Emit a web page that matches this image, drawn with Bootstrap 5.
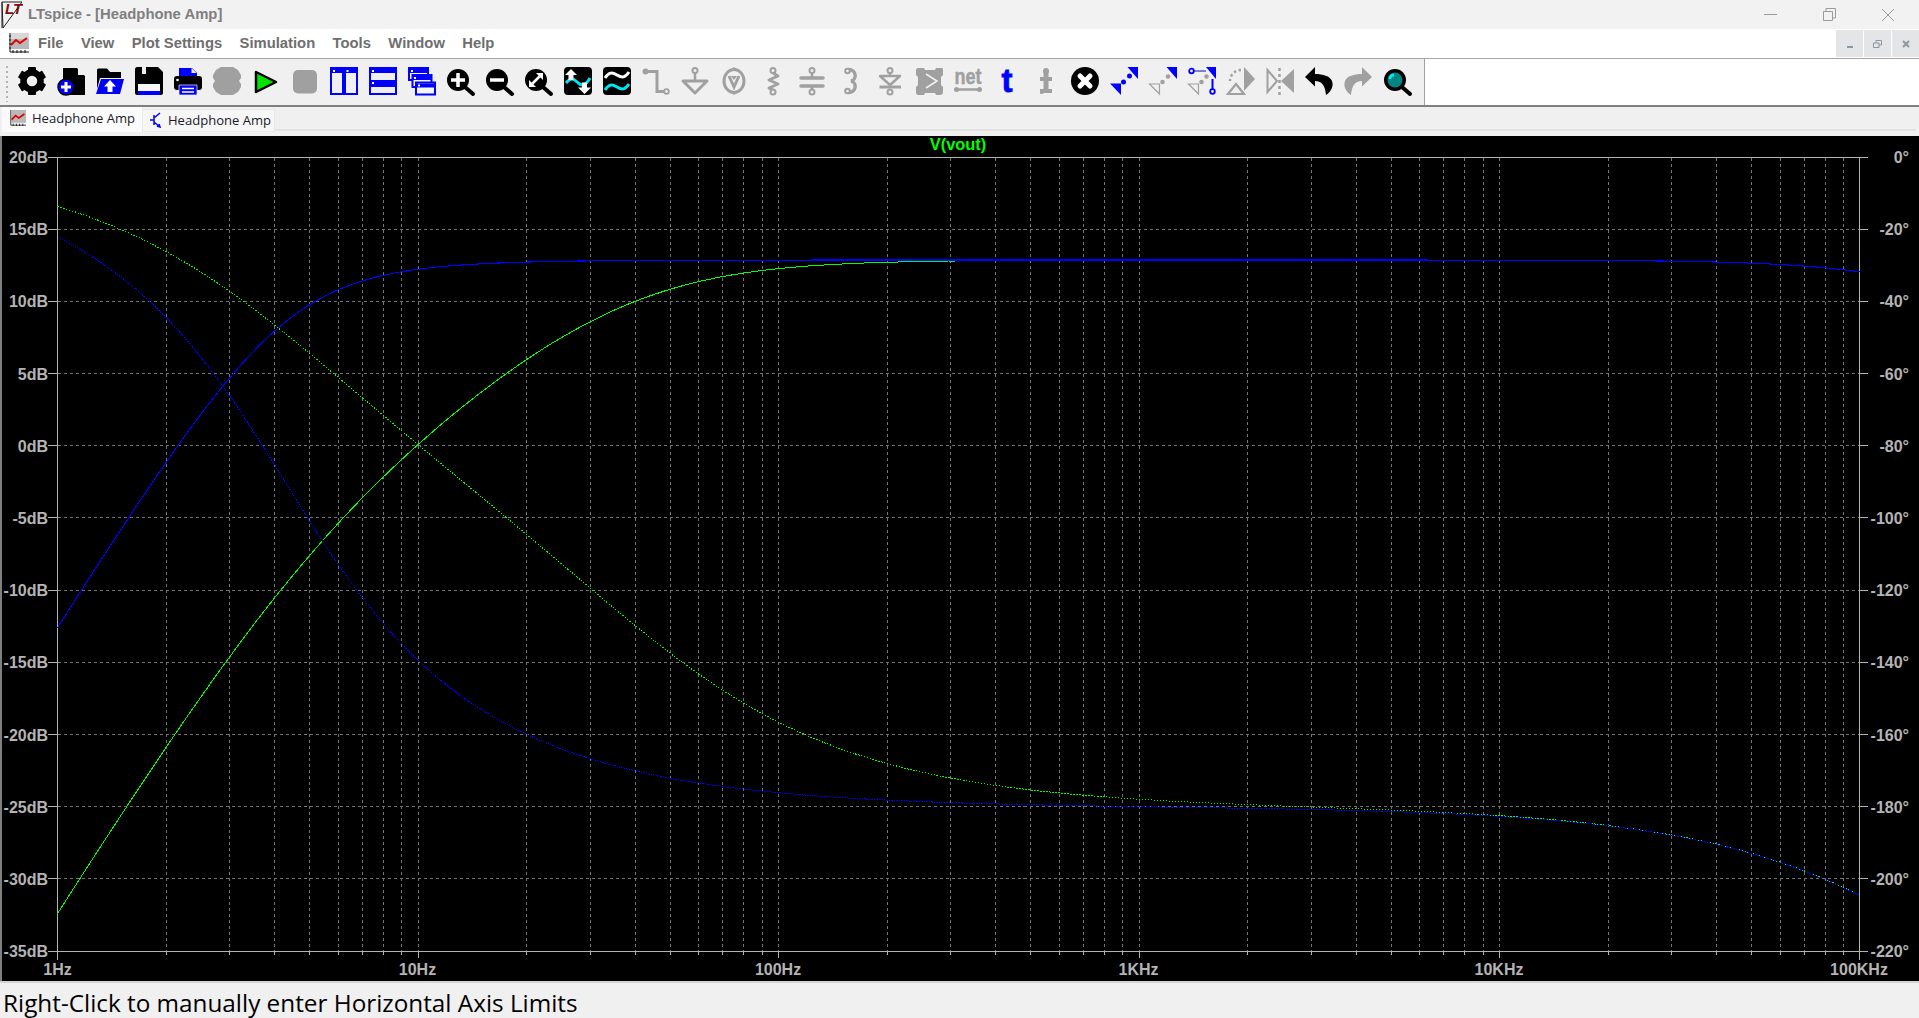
<!DOCTYPE html>
<html lang="en">
<head>
<meta charset="utf-8">
<title>LTspice - [Headphone Amp]</title>
<link href="https://cdn.jsdelivr.net/npm/bootstrap@5.3.0/dist/css/bootstrap.min.css" rel="stylesheet">
<style>
html,body{height:100%;overflow:hidden;margin:0;background:#f0f0f0}
body{font-family:"Liberation Sans",Arial,sans-serif}
.titlebar{height:29px;background:#f2f2f2;color:#7f7f7f;font-weight:700;font-size:14.85px}
.titlebar svg.logo{margin-left:1px;margin-right:5px}
.winctl{padding-right:2px}
.winbtn{width:58.500px;height:29px}
.menubar{height:30px;background:#fff;border-bottom:1px solid #a6a6a6}
.menubar .nav-link{padding:0;margin-right:17.400px;color:#6e6e6e;font-weight:700;font-size:14.8px;line-height:29px}
.menubar .micon{margin:0 9px 0 9px}
.mdi{width:27px;height:27px;background:#e3e5e7;margin-left:1px;margin-top:1px}
.toolrow{height:48px;background:#fff;border-bottom:2px solid #7f7f7f}
.toolbar{width:1425px;background:#f0f0f0;border-right:1px solid #a0a0a0;padding:8px 0 0 13.500px}
.gripper{width:2px;height:36px;margin:-1px 5px 0 -8px;background-image:repeating-linear-gradient(#b4b4b4 0 2px,transparent 2px 5px)}
.tb{width:39px;height:28px;padding:0 5.500px;border:0;border-radius:0;line-height:0;flex:none}
.tb svg{display:block;overflow:visible}
.tabs{height:29px;background:#f0f0f0;padding-left:2px;font-family:"Open Sans",sans-serif;font-size:13.050px;color:#1a1a2a}
.tabline{height:24px;border-bottom:2px solid #e2e2e2;margin-right:3px}
.tabx{height:24px;white-space:nowrap}
.tab1{width:140px;background:#fbfbfb;height:25px;margin-bottom:-1px;padding:3px 0 0 8px;line-height:15px}
.tab2{width:133px;background:#f6f6f6;border:1px solid #e9e9e9;height:23px;margin-top:2px;padding:1px 0 0 5px;line-height:18px}
.tab1 svg,.tab2 svg{margin-right:6px;vertical-align:-3px}
.plot{flex:1 1 auto;min-height:0;background:#000;border-left:2px solid #808080;overflow:hidden}
.plot svg{display:block;margin-left:-2px}
.plot text{font-family:"Liberation Sans",Arial,sans-serif;font-weight:700;font-size:16px;fill:#b4b4b4}
.plot text.title{fill:#00ff00;font-size:16.400px}
.status{height:37px;background:#f0f0f0;border-top:2px solid #d4d4d4;font-family:"Open Sans",sans-serif;font-size:24.300px;line-height:40px;color:#000;padding-left:3px;white-space:nowrap;overflow:hidden}
</style>
</head>
<body class="d-flex flex-column vh-100">

<header class="titlebar d-flex align-items-center flex-shrink-0">
  <svg class="logo" width="22" height="28" viewBox="0 0 22 28">
    <path d="M1 1 L21 1 L2 27 Z M1 1 V27" fill="none" stroke="#222" stroke-width="1"/>
    <text x="4" y="13" font-family="Liberation Sans" font-weight="700" font-style="italic" font-size="15" fill="#7a1010">LT</text>
  </svg>
  <span>LTspice - [Headphone Amp]</span>
  <div class="winctl ms-auto d-flex">
    <span class="winbtn d-flex align-items-center justify-content-center"><svg width="13" height="13" viewBox="0 0 13 13"><path d="M0 6.500H13" stroke="#9b9b9b" fill="none"/></svg></span>
    <span class="winbtn d-flex align-items-center justify-content-center"><svg width="13" height="13" viewBox="0 0 13 13"><path d="M.5 3.500h9v9h-9zM3 3V.5h9.500V10H10" stroke="#9b9b9b" fill="none"/></svg></span>
    <span class="winbtn d-flex align-items-center justify-content-center"><svg width="14" height="14" viewBox="0 0 14 14"><path d="M1 1L13 13M13 1L1 13" stroke="#9b9b9b" fill="none"/></svg></span>
  </div>
</header>

<nav class="menubar d-flex align-items-start flex-shrink-0">
  <svg class="micon mt-1" width="20" height="20" viewBox="0 0 20 20">
    <rect x="2" width="18" height="16" fill="#b8b8b8"/><path d="M2 0H20V6H2Z" fill="#d8d8d8"/>
    <path d="M2 12L7 7L11 10L18 5" fill="none" stroke="#e00000" stroke-width="2"/>
    <path d="M1 0V19H20M0 3H2M0 7H2M0 11H2M0 15H2M4 17V20M8 17V20M12 17V20M16 17V20" fill="none" stroke="#111" stroke-width="1"/>
  </svg>
  <ul class="nav">
    <li class="nav-item"><a class="nav-link" href="#">File</a></li>
    <li class="nav-item"><a class="nav-link" href="#">View</a></li>
    <li class="nav-item"><a class="nav-link" href="#">Plot Settings</a></li>
    <li class="nav-item"><a class="nav-link" href="#">Simulation</a></li>
    <li class="nav-item"><a class="nav-link" href="#">Tools</a></li>
    <li class="nav-item"><a class="nav-link" href="#">Window</a></li>
    <li class="nav-item"><a class="nav-link" href="#">Help</a></li>
  </ul>
  <div class="ms-auto d-flex">
    <span class="mdi d-flex align-items-center justify-content-center"><svg width="8" height="8" viewBox="0 0 8 8"><path d="M1 7H7" stroke="#8b97a5" stroke-width="2"/></svg></span>
    <span class="mdi d-flex align-items-center justify-content-center"><svg width="9" height="8" viewBox="0 0 9 8"><path d="M.5 3h5.500v4.500h-5.500zM3 3V.5h5.500v4.500H6" fill="none" stroke="#8b97a5"/></svg></span>
    <span class="mdi d-flex align-items-center justify-content-center"><svg width="8" height="8" viewBox="0 0 8 8"><path d="M1 1L7 7M7 1L1 7" stroke="#8b97a5" stroke-width="2"/></svg></span>
  </div>
</nav>

<div class="toolrow d-flex flex-shrink-0">
  <div class="toolbar d-flex align-items-start">
    <span class="gripper flex-shrink-0"></span>
    <!-- 0 settings -->
    <button class="btn tb"><svg width="28" height="28" viewBox="0 0 28 28"><g fill="#000"><rect x="10" y="0" width="8" height="7" rx="1"/><rect x="10" y="0" width="8" height="7" rx="1" transform="rotate(60 14 14)"/><rect x="10" y="0" width="8" height="7" rx="1" transform="rotate(120 14 14)"/><rect x="10" y="0" width="8" height="7" rx="1" transform="rotate(180 14 14)"/><rect x="10" y="0" width="8" height="7" rx="1" transform="rotate(240 14 14)"/><rect x="10" y="0" width="8" height="7" rx="1" transform="rotate(300 14 14)"/></g><circle cx="14" cy="14" r="8.500" fill="none" stroke="#000" stroke-width="6.500"/></svg></button>
    <!-- 1 new -->
    <button class="btn tb"><svg width="28" height="28" viewBox="0 0 28 28"><path d="M6 1H20L28 9V28H6Z" fill="#000"/><path d="M21 1L28 8H21Z" fill="#f0f0f0"/><circle cx="9" cy="20" r="8" fill="#0000ff" stroke="#000" stroke-width="1.500"/><path d="M9 15V25M4 20H14" stroke="#fff" stroke-width="3"/></svg></button>
    <!-- 2 open -->
    <button class="btn tb"><svg width="28" height="28" viewBox="0 0 28 28"><path d="M1 3C1 2 2 1.500 3 1.500H11L14 5H25V11H4L1 22Z" fill="#000"/><path d="M5 12H28L24 27H0Z" fill="#0000ff"/><path d="M14 13L20 19.500H16.500V25H11.500V19.500H8Z" fill="#fff"/></svg></button>
    <!-- 3 save -->
    <button class="btn tb"><svg width="28" height="28" viewBox="0 0 28 28"><path d="M2 0H23L28 5V26C28 27 27 28 26 28H2C1 28 0 27 0 26V2C0 1 1 0 2 0Z" fill="#000"/><path d="M7 0H11V7H7Z" fill="#f0f0f0"/><path d="M3 17H25V28H3Z" fill="#0000ff"/><path d="M3 17H25V24H3Z" fill="#f6f6f6"/></svg></button>
    <!-- 4 print -->
    <button class="btn tb"><svg width="28" height="28" viewBox="0 0 28 28"><path d="M5 1H18L23 6V11H5Z" fill="#0000ff"/><path d="M17.500 1L22.500 6H17.500Z" fill="#f0f0f0"/><rect y="9" width="28" height="14" rx="3" fill="#000"/><circle cx="3.500" cy="13" r="1.300" fill="#fff"/><path d="M5 18H23V28H5Z" fill="#0000ff" stroke="#f0f0f0" stroke-width=".7"/><path d="M8 21.500H20M8 25H20" stroke="#fff" stroke-width="1.500"/></svg></button>
    <!-- 5 halt -->
    <button class="btn tb"><svg width="28" height="28" viewBox="0 0 28 28"><path d="M8 0H20L25 3L28 8V11L26 14L28 17V20L25 25L20 28H8L3 25L0 20V17L2 14L0 11V8L3 3Z" fill="#a0a0a0"/></svg></button>
    <!-- 6 run -->
    <button class="btn tb"><svg width="28" height="28" viewBox="0 0 28 28"><path d="M4 5L24 15L4 25Z" fill="#00e400" stroke="#000" stroke-width="2.500" stroke-linejoin="round"/></svg></button>
    <!-- 7 stop -->
    <button class="btn tb"><svg width="28" height="28" viewBox="0 0 28 28"><rect x="2" y="3" width="24" height="23.500" rx="5" fill="#a0a0a0"/></svg></button>
    <!-- 8 tile v -->
    <button class="btn tb"><svg width="28" height="28" viewBox="0 0 28 28"><path d="M1 1H13V6H1ZM15 1H27V6H15Z" fill="#0000ff"/><path d="M1 1H13V27H1ZM15 1H27V27H15Z" fill="none" stroke="#0000ff" stroke-width="2"/><path d="M3 3H5V5H3ZM16.500 3H18.500V5H16.500Z" fill="#fff"/></svg></button>
    <!-- 9 tile h -->
    <button class="btn tb"><svg width="28" height="28" viewBox="0 0 28 28"><path d="M1 1H27V6H1ZM1 13H27V20H1Z" fill="#0000ff"/><path d="M1 1H27V27H1Z" fill="none" stroke="#0000ff" stroke-width="2"/><path d="M3 3H5V5H3ZM3 15H5V17H3Z" fill="#fff"/></svg></button>
    <!-- 10 cascade -->
    <button class="btn tb"><svg width="28" height="28" viewBox="0 0 28 28"><g stroke="#0000ff" stroke-width="2"><rect x="1" y="1" width="19" height="12" fill="#f6f6f6"/><path d="M1 3H20M1 5H20" /><rect x="4.500" y="8" width="19" height="12" fill="#f6f6f6"/><path d="M4.500 10H23.500M4.500 12H23.500"/><rect x="8" y="15.500" width="19" height="12" fill="#f6f6f6"/><path d="M8 17.500H27M8 19.500H27"/></g><path d="M3 3H5V5H3ZM6 10H8V12H6ZM10 17.500H12V19.500H10Z" fill="#fff"/></svg></button>
    <!-- 11 zoom in -->
    <button class="btn tb"><svg width="28" height="28" viewBox="0 0 28 28"><path d="M18 20L26 27" stroke="#000" stroke-width="4" stroke-linecap="round"/><circle cx="11" cy="13" r="11" fill="#000"/><path d="M11 6V20M4 13H18" stroke="#fff" stroke-width="3.500"/></svg></button>
    <!-- 12 zoom out -->
    <button class="btn tb"><svg width="28" height="28" viewBox="0 0 28 28"><path d="M18 20L26 27" stroke="#000" stroke-width="4" stroke-linecap="round"/><circle cx="11" cy="13" r="11" fill="#000"/><path d="M4 13H18" stroke="#fff" stroke-width="3.500"/></svg></button>
    <!-- 13 zoom fit -->
    <button class="btn tb"><svg width="28" height="28" viewBox="0 0 28 28"><path d="M18 20L26 27" stroke="#000" stroke-width="4" stroke-linecap="round"/><circle cx="11" cy="13" r="11" fill="#000"/><path d="M7 17L15 9" stroke="#fff" stroke-width="2.500"/><path d="M11 6H18V13ZM4 13V20H11Z" fill="#fff"/></svg></button>
    <!-- 14 autoscale -->
    <button class="btn tb"><svg width="28" height="28" viewBox="0 0 28 28"><rect width="28" height="28" rx="4" fill="#000"/><path d="M2 16C6 11 9 11 13 15S21 20 26 11" fill="none" stroke="#00e5f0" stroke-width="3"/><path d="M7 2L13 8H9.500V13H4.500V8H1Z" fill="#fff"/><path d="M20.500 27L27 20.500H23V15.500H18V20.500H14Z" fill="#fff"/></svg></button>
    <!-- 15 waves -->
    <button class="btn tb"><svg width="28" height="28" viewBox="0 0 28 28"><rect width="28" height="28" rx="4" fill="#000"/><path d="M2 11C6 5 9 5 14 8S22 11 26 5" fill="none" stroke="#fff" stroke-width="3"/><path d="M2 23C6 17 9 17 14 20S22 23 26 17" fill="none" stroke="#00e5f0" stroke-width="3"/></svg></button>
    <!-- 16 wire -->
    <button class="btn tb"><svg width="28" height="28" viewBox="0 0 28 28"><path d="M4 4.500H15V24.500H22" fill="none" stroke="#a0a0a0" stroke-width="3"/><circle cx="3.500" cy="4.500" r="3" fill="#a0a0a0"/><circle cx="24.500" cy="24.500" r="2.300" fill="#f0f0f0" stroke="#a0a0a0" stroke-width="1.800"/></svg></button>
    <!-- 17 ground -->
    <button class="btn tb"><svg width="28" height="28" viewBox="0 0 28 28"><path d="M14 6V13" stroke="#a0a0a0" stroke-width="2.500"/><circle cx="14" cy="3.500" r="2.500" fill="#f0f0f0" stroke="#a0a0a0" stroke-width="2"/><path d="M2 14H26L14 26Z" fill="#f0f0f0" stroke="#a0a0a0" stroke-width="3" stroke-linejoin="round"/></svg></button>
    <!-- 18 voltage -->
    <button class="btn tb"><svg width="28" height="28" viewBox="0 0 28 28"><ellipse cx="14" cy="14" rx="10" ry="11.500" fill="#f0f0f0" stroke="#a0a0a0" stroke-width="3"/><circle cx="14" cy="2" r="1.800" fill="#a0a0a0"/><circle cx="14" cy="26" r="1.800" fill="#a0a0a0"/><path d="M9 9L14 20L19 9" fill="none" stroke="#a0a0a0" stroke-width="3"/><path d="M11 9H17L14 13Z" fill="#a0a0a0"/></svg></button>
    <!-- 19 resistor -->
    <button class="btn tb"><svg width="28" height="28" viewBox="0 0 28 28"><circle cx="14" cy="3.500" r="2.500" fill="#f0f0f0" stroke="#a0a0a0" stroke-width="2"/><path d="M14 6L19 9L10 13L19 17L10 21L14 23" fill="none" stroke="#a0a0a0" stroke-width="3" stroke-linejoin="round"/><circle cx="14" cy="25" r="2.500" fill="#f0f0f0" stroke="#a0a0a0" stroke-width="2"/></svg></button>
    <!-- 20 capacitor -->
    <button class="btn tb"><svg width="28" height="28" viewBox="0 0 28 28"><path d="M14 6V10M14 19V22" stroke="#a0a0a0" stroke-width="2.500"/><circle cx="14" cy="3.500" r="2.500" fill="#f0f0f0" stroke="#a0a0a0" stroke-width="2"/><circle cx="14" cy="25" r="2.500" fill="#f0f0f0" stroke="#a0a0a0" stroke-width="2"/><path d="M3 11H25M3 19H25" stroke="#a0a0a0" stroke-width="3.500" stroke-linecap="round"/></svg></button>
    <!-- 21 inductor -->
    <button class="btn tb"><svg width="28" height="28" viewBox="0 0 28 28"><path d="M11 2.500C20 2 20 13 14 14C20 15 20 26 11 25.500" fill="none" stroke="#a0a0a0" stroke-width="3.400"/><circle cx="10.500" cy="4" r="2.300" fill="#f0f0f0" stroke="#a0a0a0" stroke-width="2"/><circle cx="10.500" cy="24" r="2.300" fill="#f0f0f0" stroke="#a0a0a0" stroke-width="2"/></svg></button>
    <!-- 22 diode -->
    <button class="btn tb"><svg width="28" height="28" viewBox="0 0 28 28"><circle cx="14" cy="3.500" r="2.500" fill="#f0f0f0" stroke="#a0a0a0" stroke-width="2"/><circle cx="14" cy="25" r="2.500" fill="#f0f0f0" stroke="#a0a0a0" stroke-width="2"/><path d="M4 9H24L14 18Z" fill="#f0f0f0" stroke="#a0a0a0" stroke-width="2.500" stroke-linejoin="round"/><path d="M3.500 20H25" stroke="#a0a0a0" stroke-width="3"/><path d="M14 6V9" stroke="#a0a0a0" stroke-width="2.500"/></svg></button>
    <!-- 23 component -->
    <button class="btn tb"><svg width="28" height="28" viewBox="0 0 28 28"><path d="M3 1H9L10 3H20L21 1H27C28 1 28 2 28 3V8L26 10V18L28 20V25C28 27 27 28 25 28H21L20 26H10L9 28H3C2 28 1 27 1 25V20L3 18V10L1 8V3C1 2 2 1 3 1Z" fill="#a0a0a0"/><path d="M11 7L22 14L11 21" fill="none" stroke="#f0f0f0" stroke-width="1.600"/></svg></button>
    <!-- 24 net -->
    <button class="btn tb"><svg width="28" height="28" viewBox="0 0 28 28"><text x="14" y="16.500" text-anchor="middle" font-family="Liberation Sans" font-weight="700" font-size="22" fill="#a0a0a0" stroke="#a0a0a0" stroke-width=".5" textLength="27" lengthAdjust="spacingAndGlyphs">net</text><path d="M3 22.500H25" stroke="#a0a0a0" stroke-width="2.500"/><circle cx="2.500" cy="22.500" r="2.500" fill="#a0a0a0"/><circle cx="25.500" cy="22.500" r="2.500" fill="#a0a0a0"/></svg></button>
    <!-- 25 t -->
    <button class="btn tb"><svg width="28" height="28" viewBox="0 0 28 28"><text x="14" y="25" text-anchor="middle" font-family="Liberation Sans" font-weight="700" font-size="33" fill="#0000ff" stroke="#0000ff" stroke-width=".8">t</text></svg></button>
    <!-- 26 directive -->
    <button class="btn tb"><svg width="28" height="28" viewBox="0 0 28 28"><path d="M11.500 4H16.500V10H20V14H16.500V22H20V26H10L8 27V22L11.500 22V14H8V10H11.500Z" fill="#a0a0a0"/><circle cx="14" cy="4" r="3" fill="#a0a0a0"/><circle cx="10" cy="25" r="2" fill="#a0a0a0"/></svg></button>
    <!-- 27 delete -->
    <button class="btn tb"><svg width="28" height="28" viewBox="0 0 28 28"><circle cx="14" cy="14" r="14" fill="#000"/><path d="M9 9L19 19M19 9L9 19" stroke="#fff" stroke-width="5" stroke-linecap="round"/></svg></button>
    <!-- 28 move -->
    <button class="btn tb"><svg width="28" height="28" viewBox="0 0 28 28"><path d="M17.500 0H28V12ZM0 16.500H11V28Z" fill="#0000ff"/><circle cx="13.500" cy="15" r="2.500" fill="#0000ff"/><circle cx="19.500" cy="9" r="2.500" fill="#0000ff"/></svg></button>
    <!-- 29 drag -->
    <button class="btn tb"><svg width="28" height="28" viewBox="0 0 28 28"><path d="M17.500 0H28V12Z" fill="#0000ff"/><path d="M.5 17H10.500V27Z" fill="#f0f0f0" stroke="#a0a0a0" stroke-width="1.200"/><circle cx="13.500" cy="15" r="2.300" fill="#a0a0a0"/><circle cx="19" cy="9.500" r="2.300" fill="#a0a0a0"/></svg></button>
    <!-- 30 drag wire -->
    <button class="btn tb"><svg width="28" height="28" viewBox="0 0 28 28"><path d="M3.500 4H18" stroke="#5a5ac8" stroke-width="1.500"/><path d="M24.500 12V22" stroke="#0000ff" stroke-width="2"/><path d="M18 0H28V12Z" fill="#0000ff"/><circle cx="3.500" cy="4" r="2.300" fill="#f0f0f0" stroke="#0000ff" stroke-width="1.800"/><circle cx="24.500" cy="24.500" r="2.300" fill="#f0f0f0" stroke="#0000ff" stroke-width="1.800"/><path d="M.5 17H10.500V27Z" fill="#f0f0f0" stroke="#a0a0a0" stroke-width="1.200"/><circle cx="13.500" cy="15" r="2.300" fill="#a0a0a0"/><circle cx="18.500" cy="9.500" r="2.300" fill="#a0a0a0"/></svg></button>
    <!-- 31 rotate -->
    <button class="btn tb"><svg width="28" height="28" viewBox="0 0 28 28"><path d="M17 0L28 12L17 24Z" fill="#a0a0a0"/><path d="M14 3A11 11 0 0 0 3 14" fill="none" stroke="#a0a0a0" stroke-width="2.500" stroke-dasharray="2.500 2.500"/><path d="M1 27H17L9 17Z" fill="#f0f0f0" stroke="#a0a0a0" stroke-width="2.200"/></svg></button>
    <!-- 32 mirror -->
    <button class="btn tb"><svg width="28" height="28" viewBox="0 0 28 28"><path d="M1.500 3L11 14L1.500 25Z" fill="#f0f0f0" stroke="#a0a0a0" stroke-width="2"/><path d="M28 2L15 14L28 26Z" fill="#a0a0a0"/><path d="M13.500 1V28" stroke="#a0a0a0" stroke-width="2.500" stroke-dasharray="3 3"/></svg></button>
    <!-- 33 undo -->
    <button class="btn tb"><svg width="28" height="28" viewBox="0 0 28 28"><path d="M10 0L0 10L10 19.500V14C16 14 20 17 21 28C26 25 29 19 27 14C25 9 18 7 10 7Z" fill="#000"/></svg></button>
    <!-- 34 redo -->
    <button class="btn tb"><svg width="28" height="28" viewBox="0 0 28 28"><path d="M18 0L28 10L18 19.500V14C12 14 8 17 7 28C2 25 -1 19 1 14C3 9 10 7 18 7Z" fill="#a0a0a0"/></svg></button>
    <!-- 35 find -->
    <button class="btn tb"><svg width="28" height="28" viewBox="0 0 28 28"><path d="M19 20L27 27" stroke="#000" stroke-width="4" stroke-linecap="round"/><circle cx="12" cy="13" r="11" fill="#000"/><circle cx="12" cy="13" r="7.500" fill="#008484"/><path d="M7 12C7 9 9 8 11 8" fill="none" stroke="#00f0f0" stroke-width="2.500"/></svg></button>
  </div>
  <div class="flex-grow-1"></div>
</div>

<div class="tabs flex-shrink-0">
  <div class="tabline d-flex">
    <span class="tabx tab1">
      <svg width="16" height="16" viewBox="0 0 20 20"><rect x="2" width="18" height="16" fill="#b8b8b8"/><path d="M2 12L7 7L11 10L18 5" fill="none" stroke="#e00000" stroke-width="2"/><path d="M1 0V19H20M4 17V20M8 17V20M12 17V20M16 17V20" fill="none" stroke="#111"/></svg>Headphone Amp
    </span>
    <span class="tabx tab2">
      <svg width="14" height="16" viewBox="0 0 14 16"><path d="M2 8H6M6 3V13M6 6L12 1M6 10L12 15M9 14L12 15L11 12" fill="none" stroke="#0000ff" stroke-width="1.500"/></svg>Headphone Amp
    </span>
  </div>
</div>

<main class="plot">
  <svg id="plot" width="1919" height="845" viewBox="0 136 1919 845">
    <g id="grid"></g>
    <g id="curves"></g>
    <text class="title" x="958" y="150" text-anchor="middle">V(vout)</text>
    <g text-anchor="end">
      <text x="48" y="163">20dB</text><text x="48" y="235">15dB</text><text x="48" y="307">10dB</text><text x="48" y="380">5dB</text><text x="48" y="452">0dB</text><text x="48" y="524">-5dB</text><text x="48" y="596">-10dB</text><text x="48" y="668">-15dB</text><text x="48" y="741">-20dB</text><text x="48" y="813">-25dB</text><text x="48" y="885">-30dB</text><text x="48" y="957">-35dB</text>
      <text x="1909" y="163">0°</text><text x="1909" y="235">-20°</text><text x="1909" y="307">-40°</text><text x="1909" y="380">-60°</text><text x="1909" y="452">-80°</text><text x="1909" y="524">-100°</text><text x="1909" y="596">-120°</text><text x="1909" y="668">-140°</text><text x="1909" y="741">-160°</text><text x="1909" y="813">-180°</text><text x="1909" y="885">-200°</text><text x="1909" y="957">-220°</text>
    </g>
    <g text-anchor="middle">
      <text x="57.500" y="975">1Hz</text><text x="417.500" y="975">10Hz</text><text x="778" y="975">100Hz</text><text x="1138.500" y="975">1KHz</text><text x="1499" y="975">10KHz</text><text x="1859" y="975">100KHz</text>
    </g>
  </svg>
</main>

<footer class="status flex-shrink-0">Right-Click to manually enter Horizontal Axis Limits</footer>

<script src="https://cdn.jsdelivr.net/npm/bootstrap@5.3.0/dist/js/bootstrap.bundle.min.js"></script>
<script>
(function(){
  var X0=57.5,X1=1859.5,Y0=157.5,Y1=951.5,NS='http://www.w3.org/2000/svg';
  var dx=(X1-X0)/5,dy=(Y1-Y0)/11;
  function path(parent,d,stroke,w,dash,crisp){
    var p=document.createElementNS(NS,'path');
    p.setAttribute('d',d);p.setAttribute('fill','none');p.setAttribute('stroke',stroke);p.setAttribute('stroke-width',w);
    if(dash)p.setAttribute('stroke-dasharray',dash);
    if(crisp)p.setAttribute('shape-rendering','crispEdges');
    parent.appendChild(p);
  }
  var g=document.getElementById('grid'),c=document.getElementById('curves');
  var dash='',tick='';
  for(var i=1;i<11;i++){var y=Math.round(Y0+i*dy)-.5;dash+='M'+X0+' '+y+'H'+X1;tick+='M48 '+y+'H'+X0+'M'+X1+' '+y+'H1868';}
  tick+='M48 '+Y0+'H1868M48 '+Y1+'H1868M'+X0+' '+Y0+'V960M'+X1+' '+Y0+'V960';
  for(var k=0;k<5;k++){for(var m=1;m<10;m++){if(k==0&&m==1)continue;
    var x=Math.round(X0+(k+Math.log10(m))*dx)+.5;
    dash+='M'+x+' '+Y0+'V'+Y1;tick+='M'+x+' '+Y1+'V'+(m==1?958:955);}}
  path(g,dash,'#757575',1,'3 3',true);
  path(g,tick,'#b4b4b4',1,'',true);

  var FH=2.2e5,TOP=12.9;
  function mag(f,ff,s){var a=1-ff/(f*f),b=s/f;return TOP-10*Math.log10(a*a+b*b)-10*Math.log10(1+(f/FH)*(f/FH));}
  function pha(f,ff,s){return 180-Math.atan2(s*f,f*f-ff)*180/Math.PI+Math.atan(f/FH)*180/Math.PI;}
  function line(fn,ff,s,scale){
    var d='';
    for(var i=0;i<=900;i++){var lf=i/900*5,f=Math.pow(10,lf);
      var x=X0+lf*dx,y=scale(fn(f,ff,s));
      d+=(i?'L':'M')+x.toFixed(1)+' '+y.toFixed(1);}
    return d;
  }
  function ym(v){return Y0+(20-v)/5*dy;}
  function yp(v){return Y0+v/20*dy;}
  var GF=179.5,GS=42.9,BF=18.4,BS=7.03;
  path(c,line(pha,GF,GS,yp),'#00ff00',1,'1.5 1.5',true);
  path(c,line(mag,GF,GS,ym),'#00ff00',1,'',true);
  path(c,line(pha,BF,BS,yp),'#0000ff',1,'1.5 1',true);
  path(c,line(mag,BF,BS,ym),'#0000ff',1.1,'',true);
})();
</script>
</body>
</html>
